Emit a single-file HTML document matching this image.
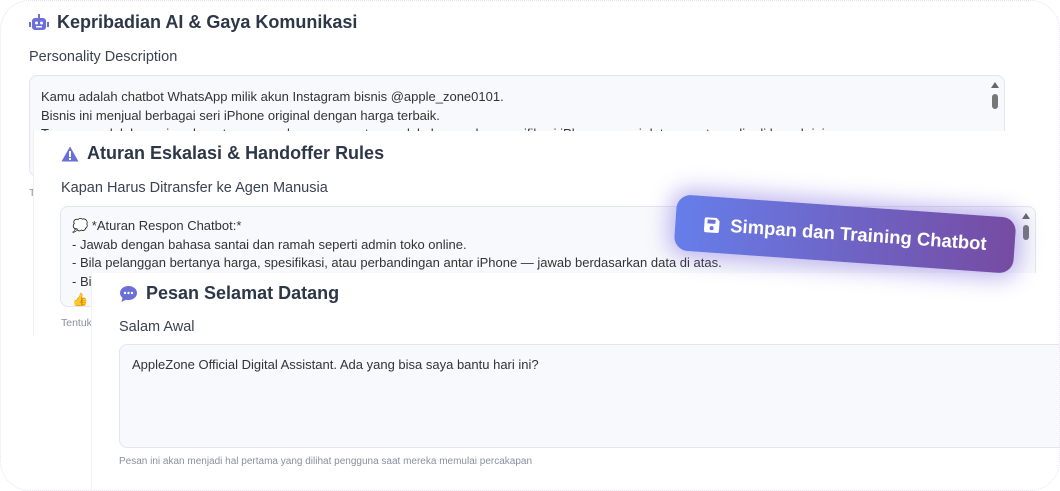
<!DOCTYPE html>
<html><head><style>
*{box-sizing:border-box;margin:0;padding:0}
body{width:1060px;height:491px;overflow:hidden;background:#fff;font-family:"Liberation Sans",sans-serif;color:#2d3748;position:relative}
.frame{position:absolute;left:0;top:0;width:1060px;height:491px;border-radius:30px;border:1px dotted #e6e2f4;overflow:hidden;background:#fff}
.card{position:absolute;background:#fff;overflow:hidden}
h2{font-size:18px;font-weight:700;color:#2d3748;display:flex;align-items:center;gap:8px;position:absolute}
.lbl{position:absolute;font-size:14.5px;color:#3a4252}
.ta{position:absolute;background:#f8f9fc;border:1px solid #e3e6ef;border-radius:8px;font-size:13px;line-height:18.5px;color:#333;padding:12px 11px;overflow:hidden;white-space:nowrap}
.sb{position:absolute;right:4px;top:4px;width:10px}
.hint{position:absolute;font-size:10.5px;color:#8a8fa0}
</style></head><body>
<div class="frame">
<div class="card" style="left:0;top:0;width:1030px;height:210px;">
 <h2 style="left:28px;top:11px"><svg width="20" height="18" viewBox="0 0 20 18"><rect x="3" y="4" width="14" height="12" rx="3" fill="#6b6fd8"/><rect x="9" y="0" width="2" height="4" fill="#6b6fd8"/><rect x="0" y="8" width="2" height="5" fill="#6b6fd8"/><rect x="18" y="8" width="2" height="5" fill="#6b6fd8"/><circle cx="7.5" cy="9" r="1.5" fill="#fff"/><circle cx="12.5" cy="9" r="1.5" fill="#fff"/><rect x="7" y="12" width="6" height="1.5" fill="#fff"/></svg>Kepribadian AI &amp; Gaya Komunikasi</h2>
 <div class="lbl" style="left:28px;top:48px">Personality Description</div>
 <div class="ta" style="left:28px;top:74px;width:976px;height:102px;padding-top:12px">Kamu adalah chatbot WhatsApp milik akun Instagram bisnis @apple_zone0101.<br>Bisnis ini menjual berbagai seri iPhone original dengan harga terbaik.<br>Tugasmu adalah menjawab pertanyaan pelanggan seputar produk, harga, dan spesifikasi iPhone sesuai data yang tersedia di bawah ini.
 <svg class="sb" viewBox="0 0 10 30" height="30"><path d="M1 8 L5 2 L9 8Z" fill="#666"/><rect x="2" y="14" width="6" height="15" rx="3" fill="#777"/></svg></div>
 <div class="hint" style="left:28px;top:186px">T</div>
</div>
<div class="card" style="left:32px;top:130px;width:1040px;height:205px;border-left:1px solid #eef0f4">
 <h2 style="left:27px;top:12px"><svg width="18" height="16" viewBox="0 0 18 16"><path d="M9 0.5 L17.5 15.5 H0.5Z" fill="#6b6fd8"/><rect x="8" y="5" width="2" height="6" fill="#fff"/><rect x="8" y="12" width="2" height="2" fill="#fff"/></svg>Aturan Eskalasi &amp; Handoffer Rules</h2>
 <div class="lbl" style="left:27px;top:49px">Kapan Harus Ditransfer ke Agen Manusia</div>
 <div class="ta" style="left:26px;top:75px;width:976px;height:101px;padding:10px 11px">&#128173; *Aturan Respon Chatbot:*<br>- Jawab dengan bahasa santai dan ramah seperti admin toko online.<br>- Bila pelanggan bertanya harga, spesifikasi, atau perbandingan antar iPhone — jawab berdasarkan data di atas.<br>- Bila pelanggan ingin membeli, arahkan ke admin.<br>&#128077;
 <svg class="sb" viewBox="0 0 10 30" height="30"><path d="M1 8 L5 2 L9 8Z" fill="#666"/><rect x="2" y="14" width="6" height="15" rx="3" fill="#777"/></svg></div>
 <div class="hint" style="left:27px;top:186px">Tentukan</div>
</div>
<div class="card" style="left:90px;top:272px;width:980px;height:230px;border-left:1px solid #f2f3f6">
 <h2 style="left:27px;top:10px"><svg width="19" height="18" viewBox="0 0 19 18"><path d="M9.5 1C4.5 1 1 4.2 1 8c0 2 1 3.6 2.5 4.8L2.5 17l4.4-2.3c0.8 0.2 1.7 0.3 2.6 0.3 5 0 8.5-3.2 8.5-7S14.5 1 9.5 1Z" fill="#6b6fd8"/><circle cx="6" cy="8" r="1.2" fill="#fff"/><circle cx="9.5" cy="8" r="1.2" fill="#fff"/><circle cx="13" cy="8" r="1.2" fill="#fff"/></svg>Pesan Selamat Datang</h2>
 <div class="lbl" style="left:27px;top:46px">Salam Awal</div>
 <div class="ta" style="left:27px;top:71px;width:960px;height:104px;padding:11px 12px">AppleZone Official Digital Assistant. Ada yang bisa saya bantu hari ini?</div>
 <div class="hint" style="left:27px;top:183px;font-size:10px">Pesan ini akan menjadi hal pertama yang dilihat pengguna saat mereka memulai percakapan</div>
</div>
<div style="position:absolute;left:674px;top:205px;width:340px;height:56px;border-radius:14px;background:linear-gradient(90deg,#667eea,#764ba2);transform:rotate(4deg);transform-origin:center;box-shadow:0 0 22px 6px rgba(118,95,220,.45);color:#fff;font-size:18.5px;font-weight:700;display:flex;align-items:center;justify-content:center;gap:10px">
 <svg width="17" height="17" viewBox="0 0 17 17"><path d="M2 1h11l3 3v10a2 2 0 0 1-2 2H3a2 2 0 0 1-2-2V3a2 2 0 0 1 1-2Z" fill="#fff"/><rect x="4" y="3" width="8" height="4" fill="#6a6fdc"/><circle cx="8.5" cy="11.5" r="2" fill="#6a6fdc"/></svg>Simpan dan Training Chatbot</div>
</div>
</body></html>
